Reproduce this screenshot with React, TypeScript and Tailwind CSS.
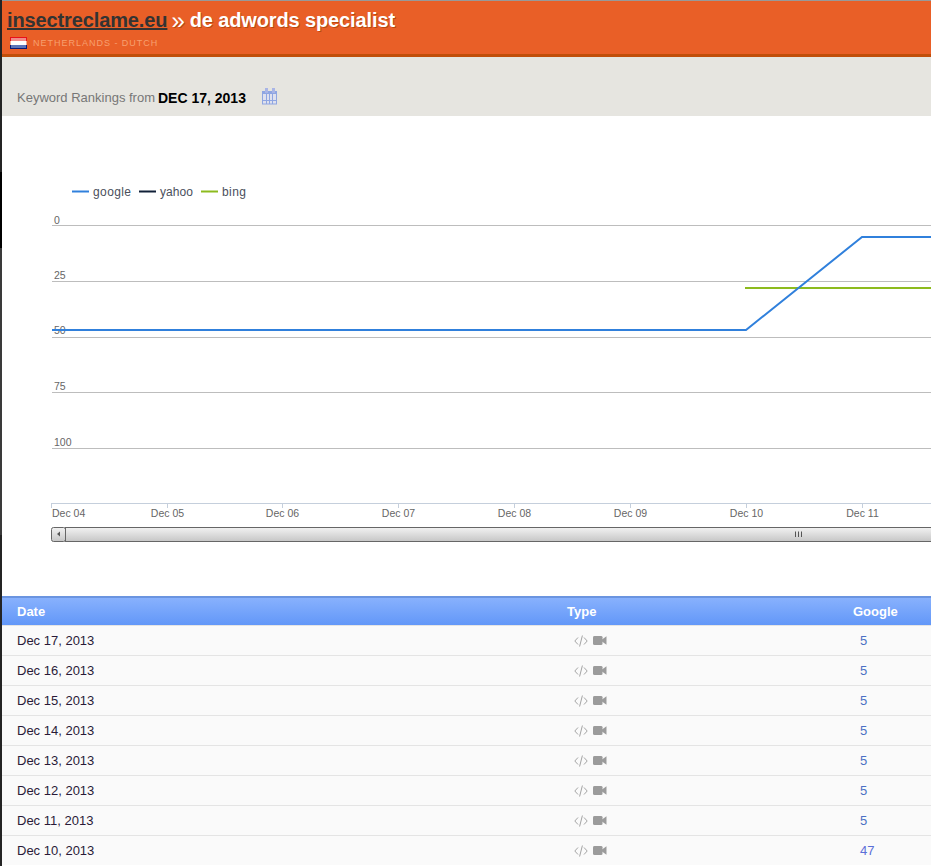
const rows = [
  { date: 'Dec 17, 2013', google: '5' },
  { date: 'Dec 16, 2013', google: '5' },
  { date: 'Dec 15, 2013', google: '5' },
  { date: 'Dec 14, 2013', google: '5' },
  { date: 'Dec 13, 2013', google: '5' },
  { date: 'Dec 12, 2013', google: '5' },
  { date: 'Dec 11, 2013', google: '5' },
  { date: 'Dec 10, 2013', google: '47' },
];

const gridLines = [
  { y: 225, labelY: 224, label: '0' },
  { y: 281, labelY: 279, label: '25' },
  { y: 337, labelY: 334, label: '50' },
  { y: 392, labelY: 390, label: '75' },
  { y: 448, labelY: 446, label: '100' },
];

const ticks = [
  { x: 167, label: 'Dec 05' },
  { x: 282, label: 'Dec 06' },
  { x: 398, label: 'Dec 07' },
  { x: 514, label: 'Dec 08' },
  { x: 630, label: 'Dec 09' },
  { x: 746, label: 'Dec 10' },
  { x: 862, label: 'Dec 11' },
];

function Flag() {
  return (
    <svg width="17" height="12" viewBox="0 0 17 12" className="block">
      <rect x="0.5" y="0.5" width="16" height="11" fill="#fff" />
      <rect x="1" y="1" width="15" height="3" fill="#f08a88" />
      <rect x="1" y="8" width="15" height="3" fill="#5c74b8" />
      <path d="M0 .5h17" stroke="#e8111a" />
      <path d="M0 11.5h17" stroke="#0a1a78" />
      <path d="M.5 0v4M16.5 0v4" stroke="#e8111a" />
      <path d="M.5 8v4M16.5 8v4" stroke="#0a1a78" />
    </svg>
  );
}

function CalendarIcon() {
  return (
    <svg width="16" height="17" viewBox="0 0 16 17" className="block">
      <rect x="0.5" y="3.5" width="14" height="12.5" fill="#dfe1ee" stroke="#8fa6e2" />
      <rect x="0" y="3" width="15" height="3" fill="#8fa6e2" />
      <rect x="3" y="0" width="3" height="5" fill="#a9b5e6" />
      <rect x="10" y="0" width="3" height="5" fill="#a9b5e6" />
      <path d="M4.5 6v10M7.5 6v10M10.5 6v10M1 12.5h13" stroke="#8fa6e2" />
    </svg>
  );
}

function CodeIcon() {
  return (
    <svg width="14" height="12" viewBox="0 0 14 12" fill="none" stroke="#a3a3a3" className="block">
      <path d="M4 2.5 0.8 6 4 9.5" />
      <path d="M10 2.5 13.2 6 10 9.5" />
      <path d="M8.4 0.5 5.6 11.5" />
    </svg>
  );
}

function VideoIcon() {
  return (
    <svg width="14" height="9" viewBox="0 0 14 10" fill="#9b9b9b" preserveAspectRatio="none" className="block">
      <rect x="0" y="0" width="9.5" height="10" rx="1.5" />
      <path d="M9 4 13.5 0.3V9.7L9 6z" />
    </svg>
  );
}

function Chart() {
  return (
    <svg width="929" height="480" viewBox="2 116 929 480" className="block" fontFamily="'Liberation Sans', Arial, sans-serif">
      <defs>
        <linearGradient id="scroll" x1="0" y1="0" x2="0" y2="1">
          <stop offset="0" stopColor="#f2f2f2" />
          <stop offset="1" stopColor="#c6c6c6" />
        </linearGradient>
      </defs>

      <g fontSize="12" fill="#4a4f5c">
        <path d="M72 191.5h17" stroke="#3080dc" strokeWidth="2" />
        <text x="93" y="196" textLength="38">google</text>
        <path d="M139 191.5h17" stroke="#102038" strokeWidth="2" />
        <text x="160" y="196" textLength="33">yahoo</text>
        <path d="M201 191.5h17" stroke="#8dbb1e" strokeWidth="2" />
        <text x="222" y="196" textLength="24">bing</text>
      </g>

      {gridLines.map((line) => (
        <g key={line.label}>
          <path d={`M52 ${line.y + 0.5}H931`} stroke="#bdbdbd" />
          <text x="54" y={line.labelY} fontSize="10.5" fill="#666">{line.label}</text>
        </g>
      ))}

      <path d="M52 503.5H931" stroke="#c5cfdc" />
      <path d="M51.5 503v5" stroke="#c5cfdc" />
      <text x="52" y="517" fontSize="10.5" fill="#666">Dec 04</text>
      {ticks.map((tick) => (
        <g key={tick.label}>
          <path d={`M${tick.x + 0.5} 503v5`} stroke="#c5cfdc" />
          <text x={tick.x + 0.5} y="517" fontSize="10.5" fill="#666" textAnchor="middle">{tick.label}</text>
        </g>
      ))}

      <path d="M745 288H931" stroke="#8dbb1e" strokeWidth="2" fill="none" />
      <path d="M52 330H746L862 237H931" stroke="#3080dc" strokeWidth="2" fill="none" />

      <rect x="51.5" y="527.5" width="14" height="14" rx="2" fill="url(#scroll)" stroke="#666" />
      <path d="M60 531.5v5L57 534z" fill="#555" />
      <rect x="65.5" y="527.5" width="880" height="14" fill="url(#scroll)" stroke="#666" />
      <path d="M795.5 531.5v5.5M798.5 531.5v5.5M801.5 531.5v5.5" stroke="#555" />
    </svg>
  );
}

export default function App() {
  return (
    <div className="flex h-[866px] w-[931px] overflow-hidden bg-white font-['Liberation_Sans',Arial,sans-serif]">
      <div className="flex w-[2px] shrink-0 flex-col bg-[#222]">
        <div className="h-[172px] bg-[#242424]" />
        <div className="h-[76px] bg-black" />
        <div className="h-[287px] bg-[#3a3a3a]" />
        <div className="flex-1 bg-[#242424]" />
      </div>

      <main className="w-[929px] shrink-0">
        <header className="h-[57px] border-t border-b-[3px] border-t-[#999] border-b-[#c04e0a] bg-[#e95f27] pl-[5px] pt-[8px]">
          <h1 className="flex items-center text-[20px] leading-[23px] font-bold tracking-[-0.12px] text-white [text-shadow:1px_1px_0_#b8480f]">
            <a className="text-[#333] underline [text-shadow:none]">insectreclame.eu</a>
            <span className="ml-[4px] mr-[5px] text-[24px] leading-[20px] font-normal">»</span>
            <span>de adwords specialist</span>
          </h1>
          <div className="mt-[5px] flex items-center pl-[3px]">
            <Flag />
            <span className="ml-[6px] text-[9px] leading-[12px] tracking-[0.99px] text-[#f7a070]">NETHERLANDS - DUTCH</span>
          </div>
        </header>

        <div className="flex h-[59px] items-end bg-[#e6e5e0] pb-[10px] pl-[15px]">
          <span className="text-[13px] leading-[16px] text-[#777]">Keyword Rankings from</span>
          <span className="ml-[3px] text-[14px] leading-[16px] font-bold text-black">DEC 17, 2013</span>
          <span className="mb-[1px] ml-[16px]">
            <CalendarIcon />
          </span>
        </div>

        <Chart />

        <div className="flex h-[29px] items-center border-t-2 border-[#6a94e0] bg-gradient-to-b from-[#88b1fd] to-[#6297f8] text-[13px] font-bold text-white">
          <div className="w-[565px] pl-[15px]">Date</div>
          <div className="w-[286px]">Type</div>
          <div>Google</div>
        </div>

        {rows.map((row) => (
          <div key={row.date} className="flex h-[30px] items-center border-t border-[#e4e4e4] bg-[#fafafa] text-[13px]">
            <div className="w-[565px] pl-[15px] text-[#2a1a38]">{row.date}</div>
            <div className="flex w-[286px] items-center gap-[5px] pl-[7px]">
              <CodeIcon />
              <VideoIcon />
            </div>
            <div className={row.google === '47' ? 'pl-[7px] text-[#5a6fd8]' : 'pl-[7px] text-[#4a70c4]'}>{row.google}</div>
          </div>
        ))}
      </main>
    </div>
  );
}
